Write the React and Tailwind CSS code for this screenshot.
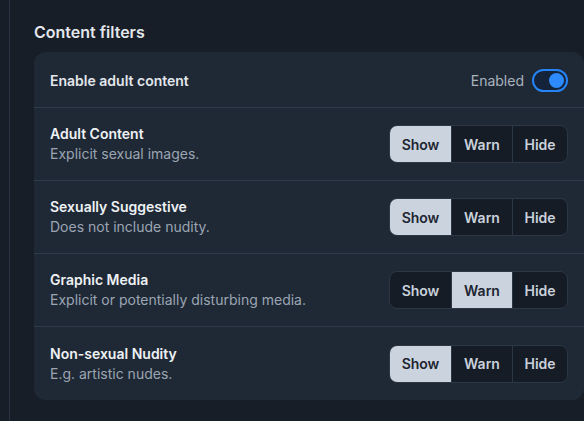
import React, { useState } from "react";

const filters = [
  { title: "Adult Content", desc: "Explicit sexual images.", value: "Show" },
  { title: "Sexually Suggestive", desc: "Does not include nudity.", value: "Show" },
  { title: "Graphic Media", desc: "Explicit or potentially disturbing media.", value: "Warn" },
  { title: "Non-sexual Nudity", desc: "E.g. artistic nudes.", value: "Show" },
];

const options = ["Show", "Warn", "Hide"];

const Segmented = ({ value, onChange }) => (
  <div className="flex h-[38px] rounded-lg border border-[#2c3745] overflow-hidden">
    {options.map((opt, i) => (
      <button
        key={opt}
        onClick={() => onChange(opt)}
        className={`text-[14px] font-semibold ${i === 2 ? "w-[55px]" : "w-[61px]"} ${
          i > 0 ? "border-l border-[#2c3745]" : ""
        } ${value === opt ? "bg-[#cbd3de] text-[#1d2531]" : "bg-[#161c25] text-[#c9d1dc]"}`}
      >
        {opt}
      </button>
    ))}
  </div>
);

const App = () => {
  const [values, setValues] = useState(filters.map((f) => f.value));
  const [enabled, setEnabled] = useState(true);

  return (
    <div className="min-h-screen bg-[#181e27] flex font-['Inter',sans-serif] overflow-hidden">
      <div className="w-[10px] shrink-0 border-r border-[#283343]" />
      <div className="flex-1 pl-[24px] pt-[22px] pb-[21px]">
        <h2 className="text-[16px] font-semibold text-[#e3e7ec] leading-[20px] mb-[10px]">Content filters</h2>
        <div className="bg-[#1f2936] rounded-[12px]">
          <div className="h-[56px] flex items-center justify-between pl-4 pr-4 pt-[1px] border-b border-[#2c3a4b]">
            <span className="text-[14px] font-semibold text-[#e3e7ec]">Enable adult content</span>
            <div className="flex items-center gap-2">
              <span className="text-[14px] text-[#aab3bf]">Enabled</span>
              <button
                onClick={() => setEnabled(!enabled)}
                className={`w-[36px] h-[23px] rounded-full border-2 border-[#2583f5] bg-[#142339] flex items-center px-[2px] ${
                  enabled ? "justify-end" : "justify-start"
                }`}
              >
                <span className="w-[15px] h-[15px] rounded-full bg-[#2d8bff]" />
              </button>
            </div>
          </div>
          {filters.map((f, i) => (
            <div
              key={f.title}
              className={`h-[73px] flex items-center justify-between pl-4 pr-4 ${
                i < filters.length - 1 ? "border-b border-[#2c3a4b]" : ""
              }`}
            >
              <div className="leading-[20px]">
                <div className="text-[14px] font-semibold text-[#eef1f4]">{f.title}</div>
                <div className="text-[14px] text-[#9ba5b2]">{f.desc}</div>
              </div>
              <Segmented
                value={values[i]}
                onChange={(v) => setValues(values.map((x, j) => (j === i ? v : x)))}
              />
            </div>
          ))}
        </div>
      </div>
    </div>
  );
};

export default App;
